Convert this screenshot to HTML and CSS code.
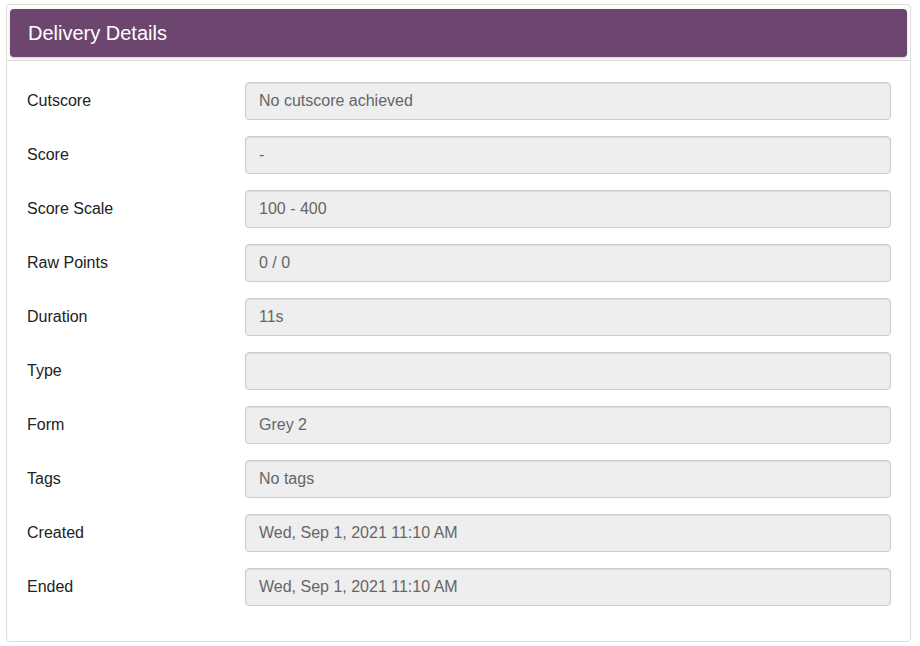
FILE: index.html
```html
<!DOCTYPE html>
<html lang="en">
<head>
<meta charset="UTF-8" />
<title>Delivery Details</title>
<link rel="stylesheet" href="styles.css">
</head>
<body>
<div class="page">
  <div class="panel">
    <div class="panel-heading">
      <h3 class="panel-title">Delivery Details</h3>
    </div>
    <div class="panel-body">
      <div class="field">
        <label>Cutscore</label>
        <div class="field-value">No cutscore achieved</div>
      </div>
      <div class="field">
        <label>Score</label>
        <div class="field-value">-</div>
      </div>
      <div class="field">
        <label>Score Scale</label>
        <div class="field-value">100 - 400</div>
      </div>
      <div class="field">
        <label>Raw Points</label>
        <div class="field-value">0 / 0</div>
      </div>
      <div class="field">
        <label>Duration</label>
        <div class="field-value">11s</div>
      </div>
      <div class="field">
        <label>Type</label>
        <div class="field-value"></div>
      </div>
      <div class="field">
        <label>Form</label>
        <div class="field-value">Grey 2</div>
      </div>
      <div class="field">
        <label>Tags</label>
        <div class="field-value">No tags</div>
      </div>
      <div class="field">
        <label>Created</label>
        <div class="field-value">Wed, Sep 1, 2021 11:10 AM</div>
      </div>
      <div class="field">
        <label>Ended</label>
        <div class="field-value">Wed, Sep 1, 2021 11:10 AM</div>
      </div>
    </div>
  </div>
</div>
</body>
</html>
```

FILE: styles.css
```css
* {
  box-sizing: border-box;
}
body {
  margin: 0;
  font-family: "Liberation Sans", Arial, sans-serif;
  font-size: 16px;
  color: #333;
  background: #fff;
}
.page {
  padding: 4px 9px 4px 6px;
}

/* panel */
.panel {
  border: 1px solid #ddd;
  border-radius: 4px;
  background: #fff;
  height: 638px;
}
.panel-heading {
  padding: 4px 3px 3px 3px;
  border-bottom: 1px solid #ddd;
}
.panel-title {
  margin: 0;
  height: 48px;
  line-height: 48px;
  padding-left: 18px;
  background: #6c466e;
  color: #fff;
  font-size: 20px;
  font-weight: normal;
  border-radius: 4px;
  box-shadow: 0 1px 3px rgba(0, 0, 0, 0.2);
}
.panel-body {
  padding: 21px 19px 34px 20px;
  display: flex;
  flex-direction: column;
  gap: 16px;
}

/* rows */
.field {
  display: grid;
  grid-template-columns: 218px 1fr;
  align-items: center;
}
.field label {
  color: #222;
}
.field-value {
  height: 38px;
  line-height: 36px;
  padding: 0 13px;
  background: #eee;
  border: 1px solid #ccc;
  border-radius: 4px;
  color: #666;
  box-shadow: inset 0 1px 1px rgba(0, 0, 0, 0.075);
}
```
